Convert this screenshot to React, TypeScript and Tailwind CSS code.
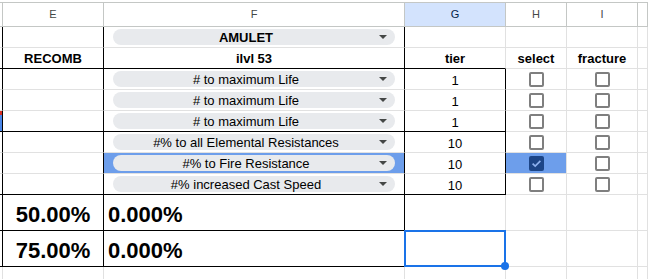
import React from 'react';

const mods = [
  { label: '# to maximum Life', tier: '1', hit: false },
  { label: '# to maximum Life', tier: '1', hit: false },
  { label: '# to maximum Life', tier: '1', hit: false },
  { label: '#% to all Elemental Resistances', tier: '10', hit: false },
  { label: '#% to Fire Resistance', tier: '10', hit: true },
  { label: '#% increased Cast Speed', tier: '10', hit: false },
];

type CellProps = { r?: boolean; b?: boolean; className?: string; children?: React.ReactNode };

const Cell = ({ r = false, b = false, className = '', children }: CellProps) => (
  <div
    className={`border-r border-b ${r ? 'border-r-black' : 'border-r-[#e1e1e1]'} ${
      b ? 'border-b-black' : 'border-b-[#e1e1e1]'
    } ${className}`}
  >
    {children}
  </div>
);

const Chip = ({ text, bold = false }: { text: string; bold?: boolean }) => (
  <div className="mx-[9px] flex h-[16px] flex-1 items-center rounded-full bg-[#e8eaed] pr-[8px]">
    <span className={`flex-1 text-center text-[13px] leading-none text-black ${bold ? 'font-bold' : ''}`}>{text}</span>
    <span className="h-0 w-0 border-x-[4px] border-t-[4px] border-x-transparent border-t-[#444746]" />
  </div>
);

const Box = ({ on = false }: { on?: boolean }) =>
  on ? (
    <div className="flex h-[15px] w-[15px] items-center justify-center rounded-[2px] bg-[#1c4587]">
      <svg width="13" height="13" viewBox="0 0 13 13">
        <path d="M2.6 6.6 L5.2 9 L10.4 3.9" fill="none" stroke="#8db1ef" strokeWidth="1.7" />
      </svg>
    </div>
  ) : (
    <div className="h-[15px] w-[15px] rounded-[2px] border-2 border-[#7f7f7f]" />
  );

const Head = ({ label, active = false }: { label?: string; active?: boolean }) => (
  <div
    className={`flex items-center justify-center border-y border-r border-[#c4c7c5] text-[11px] ${
      active ? 'bg-[#d3e3fd] text-[#041e49]' : 'bg-white text-[#444746]'
    }`}
  >
    {label}
  </div>
);

export default function App() {
  return (
    <div className="relative h-[279px] w-[648px] overflow-hidden bg-white font-['Liberation_Sans',Arial,sans-serif] text-black">
      <div className="mt-[2px] grid h-[25px] grid-cols-[3px_101px_301px_101px_61px_71px_10px]">
        <Head />
        <Head label="E" />
        <Head label="F" />
        <Head label="G" active />
        <Head label="H" />
        <Head label="I" />
        <Head />
      </div>

      <div className="grid grid-cols-[3px_101px_301px_101px_61px_71px_10px] grid-rows-[21px_21px_21px_21px_21px_21px_21px_21px_36px_36px_14px]">
        {/* item row */}
        <Cell r />
        <Cell r />
        <Cell r className="flex items-center">
          <Chip text="AMULET" bold />
        </Cell>
        <Cell />
        <Cell />
        <Cell />
        <Cell />

        {/* header labels */}
        <Cell r b />
        <Cell r b className="flex items-center justify-center text-[13px] font-bold leading-none">
          RECOMB
        </Cell>
        <Cell r b className="flex items-center justify-center text-[13px] font-bold leading-none">
          ilvl 53
        </Cell>
        <Cell b className="flex items-center justify-center text-[13px] font-bold leading-none">
          tier
        </Cell>
        <Cell className="flex items-center justify-center text-[13px] font-bold leading-none">select</Cell>
        <Cell className="flex items-center justify-center text-[13px] font-bold leading-none">fracture</Cell>
        <Cell />

        {mods.map((m, i) => {
          const end = i === 2 || i === 5;
          return (
            <React.Fragment key={i}>
              <Cell r b={end} className="flex flex-col">
                {i === 2 && (
                  <>
                    <div className="h-[4px] w-[2px] bg-[#d93025]" />
                    <div className="w-[2px] flex-1 bg-[#4a86e8]" />
                  </>
                )}
              </Cell>
              <Cell r b={end} />
              <Cell r b={end} className={`flex items-center ${m.hit ? 'bg-[#6d9eeb]' : ''}`}>
                <Chip text={m.label} />
              </Cell>
              <Cell r b={end} className="flex items-end justify-center pb-[2px] text-[13px] leading-none">
                {m.tier}
              </Cell>
              <Cell className={`flex items-center justify-center ${m.hit ? 'bg-[#6d9eeb]' : ''}`}>
                <Box on={m.hit} />
              </Cell>
              <Cell className="flex items-center justify-center">
                <Box />
              </Cell>
              <Cell />
            </React.Fragment>
          );
        })}

        {/* odds rows */}
        <Cell r b />
        <Cell r b className="flex items-end justify-center pb-[4px] text-[22px] font-bold leading-none">
          50.00%
        </Cell>
        <Cell r b className="flex items-end pb-[4px] pl-[4px] text-[22px] font-bold leading-none">
          0.000%
        </Cell>
        <Cell />
        <Cell />
        <Cell />
        <Cell />

        <Cell r b />
        <Cell r b className="flex items-end justify-center pb-[4px] text-[22px] font-bold leading-none">
          75.00%
        </Cell>
        <Cell r b className="flex items-end pb-[4px] pl-[4px] text-[22px] font-bold leading-none">
          0.000%
        </Cell>
        <Cell className="relative">
          <div className="absolute -left-[1px] -top-[1px] h-[37px] w-[102px] border-2 border-[#1a73e8]">
            <div className="absolute -bottom-[5px] -right-[5px] h-[8px] w-[8px] rounded-full bg-[#1a73e8]" />
          </div>
        </Cell>
        <Cell />
        <Cell />
        <Cell />

        <Cell />
        <Cell />
        <Cell />
        <Cell />
        <Cell />
        <Cell />
        <Cell />
      </div>
    </div>
  );
}
